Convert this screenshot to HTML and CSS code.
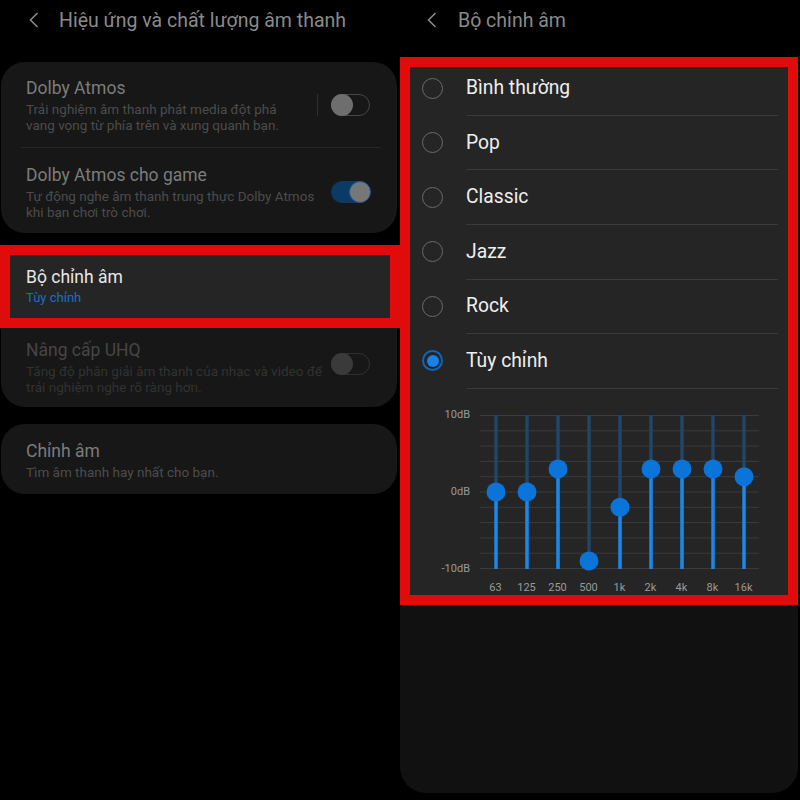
FILE: index.html
```html
<!DOCTYPE html>
<html>
<head>
  <meta charset="utf-8">
  <title>Bộ chỉnh âm</title>
  <link rel="stylesheet" href="styles.css">
</head>
<body>
  <div class="screen">
    <!-- left: sound settings -->
    <section class="pane">
      <header class="topbar">
        <svg class="back" width="10" height="16" viewBox="0 0 10 16"><path d="M8.5 1 L1.5 8 L8.5 15" fill="none" stroke="#8a8a8a" stroke-width="1.6"/></svg>
        <h1>Hiệu ứng và chất lượng âm thanh</h1>
      </header>

      <div class="card card-dolby">
        <div class="row">
          <div class="row-text">
            <div class="row-title">Dolby Atmos</div>
            <div class="row-sub">Trải nghiệm âm thanh phát media đột phá<br>vang vọng từ phía trên và xung quanh bạn.</div>
          </div>
          <span class="vsep"></span>
          <div class="switch"><span class="thumb"></span></div>
        </div>
        <div class="divider"></div>
        <div class="row row-second">
          <div class="row-text">
            <div class="row-title">Dolby Atmos cho game</div>
            <div class="row-sub">Tự động nghe âm thanh trung thực Dolby Atmos<br>khi bạn chơi trò chơi.</div>
          </div>
          <div class="switch on"><span class="thumb"></span></div>
        </div>
      </div>

      <div class="card card-eq">
        <div class="row highlight">
          <div class="row-text">
            <div class="row-title">Bộ chỉnh âm</div>
            <div class="row-sub">Tùy chỉnh</div>
          </div>
        </div>
        <div class="row disabled">
          <div class="row-text">
            <div class="row-title">Nâng cấp UHQ</div>
            <div class="row-sub">Tăng độ phân giải âm thanh của nhạc và video để<br>trải nghiệm nghe rõ ràng hơn.</div>
          </div>
          <div class="switch"><span class="thumb"></span></div>
        </div>
      </div>

      <div class="card card-tune">
        <div class="row">
          <div class="row-text">
            <div class="row-title">Chỉnh âm</div>
            <div class="row-sub">Tìm âm thanh hay nhất cho bạn.</div>
          </div>
        </div>
      </div>
    </section>

    <!-- right: equalizer -->
    <section class="pane">
      <header class="topbar topbar-right">
        <svg class="back" width="10" height="16" viewBox="0 0 10 16"><path d="M8.5 1 L1.5 8 L8.5 15" fill="none" stroke="#8a8a8a" stroke-width="1.6"/></svg>
        <h1>Bộ chỉnh âm</h1>
      </header>

      <div class="eq-panel">
        <div class="eq-box">
          <div class="option"><span class="radio"></span><span class="option-label">Bình thường</span></div>
          <div class="option"><span class="radio"></span><span class="option-label">Pop</span></div>
          <div class="option"><span class="radio"></span><span class="option-label">Classic</span></div>
          <div class="option"><span class="radio"></span><span class="option-label">Jazz</span></div>
          <div class="option"><span class="radio"></span><span class="option-label">Rock</span></div>
          <div class="option"><span class="radio checked"><span class="dot"></span></span><span class="option-label">Tùy chỉnh</span></div>

          <div class="eq-chart">
            <div class="db-scale">
              <span>10dB</span>
              <span>0dB</span>
              <span>-10dB</span>
            </div>
            <svg class="eq-plot" width="279" height="154" viewBox="0 0 279 154">
              <g stroke="#3b3b3b" stroke-width="1">
                <line x1="0" x2="279" y1="0.5" y2="0.5"/>
                <line x1="0" x2="279" y1="15.8" y2="15.8"/>
                <line x1="0" x2="279" y1="31.1" y2="31.1"/>
                <line x1="0" x2="279" y1="46.4" y2="46.4"/>
                <line x1="0" x2="279" y1="61.7" y2="61.7"/>
                <line x1="0" x2="279" y1="77" y2="77"/>
                <line x1="0" x2="279" y1="92.3" y2="92.3"/>
                <line x1="0" x2="279" y1="107.6" y2="107.6"/>
                <line x1="0" x2="279" y1="122.9" y2="122.9"/>
                <line x1="0" x2="279" y1="138.2" y2="138.2"/>
                <line x1="0" x2="279" y1="153.5" y2="153.5"/>
              </g>
              <!-- one band: dim track above knob, bright below -->
              <g stroke-width="3.5">
                <line x1="16" x2="16" y1="0" y2="77" stroke="#22456a"/><line x1="16" x2="16" y1="77" y2="154" stroke="#1a88ea"/>
                <line x1="47" x2="47" y1="0" y2="77" stroke="#22456a"/><line x1="47" x2="47" y1="77" y2="154" stroke="#1a88ea"/>
                <line x1="78" x2="78" y1="0" y2="54" stroke="#22456a"/><line x1="78" x2="78" y1="54" y2="154" stroke="#1a88ea"/>
                <line x1="109" x2="109" y1="0" y2="146" stroke="#22456a"/><line x1="109" x2="109" y1="146" y2="154" stroke="#1a88ea"/>
                <line x1="140" x2="140" y1="0" y2="92.3" stroke="#22456a"/><line x1="140" x2="140" y1="92.3" y2="154" stroke="#1a88ea"/>
                <line x1="171" x2="171" y1="0" y2="54" stroke="#22456a"/><line x1="171" x2="171" y1="54" y2="154" stroke="#1a88ea"/>
                <line x1="202" x2="202" y1="0" y2="54" stroke="#22456a"/><line x1="202" x2="202" y1="54" y2="154" stroke="#1a88ea"/>
                <line x1="233" x2="233" y1="0" y2="54" stroke="#22456a"/><line x1="233" x2="233" y1="54" y2="154" stroke="#1a88ea"/>
                <line x1="264" x2="264" y1="0" y2="61.7" stroke="#22456a"/><line x1="264" x2="264" y1="61.7" y2="154" stroke="#1a88ea"/>
              </g>
              <g fill="#0b74d8">
                <circle cx="16" cy="77" r="9.5"/>
                <circle cx="47" cy="77" r="9.5"/>
                <circle cx="78" cy="54" r="9.5"/>
                <circle cx="109" cy="146" r="9.5"/>
                <circle cx="140" cy="92.3" r="9.5"/>
                <circle cx="171" cy="54" r="9.5"/>
                <circle cx="202" cy="54" r="9.5"/>
                <circle cx="233" cy="54" r="9.5"/>
                <circle cx="264" cy="61.7" r="9.5"/>
              </g>
            </svg>
            <div></div>
            <div class="freqs">
              <span>63</span><span>125</span><span>250</span><span>500</span><span>1k</span><span>2k</span><span>4k</span><span>8k</span><span>16k</span>
            </div>
          </div>
        </div>
      </div>
    </section>
  </div>
</body>
</html>
```

FILE: styles.css
```css
/* base */
body {
  margin: 0;
  background: #000;
  font-family: Roboto, "Noto Sans", sans-serif;
}

.screen {
  display: flex;
  width: 800px;
  height: 800px;
  overflow: hidden;
}

.pane {
  width: 400px;
  flex-shrink: 0;
}

/* header */
.topbar {
  height: 40px;
  display: flex;
  align-items: center;
  gap: 20px;
  padding-left: 29px;
}

.topbar h1 {
  margin: 0;
  font-size: 19.5px;
  font-weight: 400;
  color: #8a8a8a;
}

.topbar-right {
  padding-left: 27px;
  gap: 21px;
}

/* left cards */
.card {
  background: #171717;
  border-radius: 24px;
  margin: 0 3px 0 1px;
}

.card-dolby {
  margin-top: 22px;
  padding-bottom: 13px;
}

.card-eq {
  margin-top: 12px;
}

.card-tune {
  margin-top: 17px;
}

.row {
  display: flex;
  align-items: center;
  padding: 15px 27px 14px 25px;
}

.row-second {
  padding-top: 16px;
  padding-bottom: 0;
}

.row-text {
  flex: 1;
  min-width: 0;
  white-space: nowrap;
}

.row-title {
  font-size: 17.5px;
  line-height: 22px;
  color: #7c7c7c;
}

.row-sub {
  margin-top: 2px;
  font-size: 13.5px;
  line-height: 16px;
  color: #4c4c4c;
}

.divider {
  height: 1px;
  background: #262626;
  margin: 0 17px 0 20px;
}

.vsep {
  width: 1px;
  height: 22px;
  background: #303030;
  margin-right: 13px;
}

.switch {
  box-sizing: border-box;
  width: 39px;
  height: 22px;
  flex-shrink: 0;
  border: 1.5px solid #464646;
  border-radius: 11px;
  display: flex;
  align-items: center;
}

.switch .thumb {
  width: 22px;
  height: 22px;
  margin: 0 -1.5px;
  border-radius: 50%;
  background: #6e6e6e;
}

.switch.on {
  background: #0b3a66;
  border-color: #0b3a66;
  justify-content: flex-end;
}

.switch.on .thumb {
  box-sizing: border-box;
  background: #777;
  border: 1.5px solid #1d5a92;
}

/* highlighted equalizer row */
.highlight {
  margin: 0 -3px 0 -1px;
  border: 10px solid #e10b0b;
  background: #252525;
  padding: 11px 16px 12px;
}

.highlight .row-title {
  color: #e8e8e8;
}

.highlight .row-sub {
  font-size: 13px;
  color: #1b6fc2;
}

.disabled {
  padding: 11px 27px 12px 25px;
}

.disabled .row-title {
  color: #464646;
}

.disabled .row-sub {
  color: #323232;
}

.disabled .switch {
  margin-bottom: 6px;
  border-color: #303030;
}

.disabled .thumb {
  background: #3a3a3a;
}

.card-tune .row {
  padding: 16px 25px 14px;
}

/* right panel */
.eq-panel {
  height: 736px;
  margin: 17px 2px 0 0;
  background: #111;
  border-radius: 0 0 26px 26px;
}

.eq-box {
  height: 528px;
  border: 10px solid #e10b0b;
  background: #252525;
}

.option {
  display: flex;
  align-items: flex-start;
}

.radio {
  box-sizing: border-box;
  width: 21px;
  height: 21px;
  flex-shrink: 0;
  margin: 16.3px 23px 0 12px;
  border: 1.5px solid #6b6b6b;
  border-radius: 50%;
}

.option:first-child .radio {
  margin-top: 10.5px;
}

.radio.checked {
  border: 2px solid #0f66b8;
  display: flex;
  align-items: center;
  justify-content: center;
}

.radio .dot {
  width: 12px;
  height: 12px;
  border-radius: 50%;
  background: #1a82e6;
}

.option-label {
  flex: 1;
  margin-right: 10px;
  padding: 15.8px 0;
  border-bottom: 1px solid #3a3a3a;
  font-size: 19.3px;
  line-height: 22px;
  color: #efefef;
}

.option:first-child .option-label {
  padding-top: 10px;
}

/* equalizer chart */
.eq-chart {
  display: grid;
  grid-template-columns: 60px 279px;
  column-gap: 10px;
  row-gap: 5px;
  padding-top: 19px;
}

.db-scale {
  height: 168px;
  display: flex;
  flex-direction: column;
  justify-content: space-between;
  text-align: right;
  font-size: 11px;
  line-height: 14px;
  color: #9a9a9a;
}

.eq-plot {
  display: block;
  margin-top: 7px;
  overflow: visible;
}

.freqs {
  display: flex;
  font-size: 11px;
  line-height: 14px;
  color: #9a9a9a;
}

.freqs span {
  width: 31px;
  text-align: center;
}
```
